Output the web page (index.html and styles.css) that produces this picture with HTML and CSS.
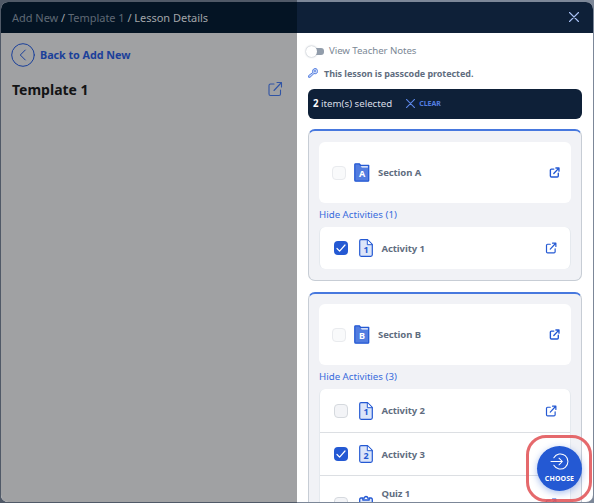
FILE: index.html
```html
<!DOCTYPE html>
<html lang="en">
<head>
<meta charset="utf-8">
<title>Lesson Details</title>
<link rel="stylesheet" href="styles.css">
</head>
<body>
<svg class="defs" aria-hidden="true">
  <symbol id="external" viewBox="0 0 16 16"><path d="M7 3H3.500A1.500 1.500 0 0 0 2 4.500V13a1.500 1.500 0 0 0 1.500 1.500H12a1.500 1.500 0 0 0 1.500-1.500V9M7 9.500L14 2M10 1.500h4.500V6"/></symbol>
  <symbol id="folder" viewBox="0 0 16 19"><path d="M.8 17.200V1.500Q.8.800 1.500.8h3.700l1.300 1.500h8.200v15.200q0 .7-.7.7H1.800q-1 0-1-1z" fill="#527de0" stroke="#2459d3" stroke-width="1.300"/><path d="M6.700 3.300h7.200v1.200H7.800z" fill="#fff"/></symbol>
  <symbol id="file" viewBox="0 0 14 18"><path d="M2 .7h6.500l4.800 4.800v10.300q0 1.500-1.500 1.500H2.200Q.7 17.300.7 15.800V2Q.7.700 2 .7z" fill="#dce5f9" stroke="#2459d3" stroke-width="1.200"/><path d="M8.300 1v4.700h4.700" fill="#fff" stroke="#2459d3" stroke-width="1"/></symbol>
  <symbol id="cross" viewBox="0 0 10 10"><path d="M.5.500l9 9M9.500.500l-9 9"/></symbol>
</svg>
<main class="modal">
  <header class="header">
    <nav class="crumbs"><span>Add New</span> <b>/</b> <span>Template 1</span> <b>/</b> <b>Lesson Details</b></nav>
    <svg class="close"><use href="#cross"/></svg>
  </header>
  <div class="body">
    <section class="left">
      <div class="back">
        <svg viewBox="0 0 24 24"><circle cx="12" cy="12" r="11.300"/><path d="M14.300 7l-5 5 5 5"/></svg>
        <span>Back to Add New</span>
      </div>
      <div class="title"><h1>Template 1</h1><svg><use href="#external"/></svg></div>
    </section>
    <section class="panel">
      <div class="notes"><i class="toggle"></i><span>View Teacher Notes</span></div>
      <div class="passcode">
        <svg viewBox="0 0 10 10"><path d="M4.700 4.100A2.600 2.600 0 1 1 6 5.500L2 9.300H.6V8z" fill="#c9d7f6" stroke="#527de0"/><circle cx="7" cy="3" r=".8" fill="#2459d3"/></svg>
        <span>This lesson is passcode protected.</span>
      </div>
      <div class="selected"><span><strong>2</strong> item(s) selected</span><svg><use href="#cross"/></svg><b>CLEAR</b></div>

      <article class="card">
        <div class="section"><i class="check muted"></i><span class="icon folder"><svg><use href="#folder"/></svg><b>A</b></span><span class="name">Section A</span><svg class="open"><use href="#external"/></svg></div>
        <div class="hide">Hide Activities (1)</div>
        <div class="list">
          <div class="row"><i class="check on"><svg viewBox="0 0 14 14"><path d="M3 7.500l2.600 2.600L11 4"/></svg></i><span class="icon file"><svg><use href="#file"/></svg><b>1</b></span><span class="name">Activity 1</span><svg class="open"><use href="#external"/></svg></div>
        </div>
      </article>

      <article class="card">
        <div class="section"><i class="check muted"></i><span class="icon folder"><svg><use href="#folder"/></svg><b>B</b></span><span class="name">Section B</span><svg class="open"><use href="#external"/></svg></div>
        <div class="hide">Hide Activities (3)</div>
        <div class="list">
          <div class="row"><i class="check"></i><span class="icon file"><svg><use href="#file"/></svg><b>1</b></span><span class="name">Activity 2</span><svg class="open"><use href="#external"/></svg></div>
          <div class="row"><i class="check on"><svg viewBox="0 0 14 14"><path d="M3 7.500l2.600 2.600L11 4"/></svg></i><span class="icon file"><svg><use href="#file"/></svg><b>2</b></span><span class="name">Activity 3</span><svg class="open"><use href="#external"/></svg></div>
          <div class="row quiz"><i class="check"></i><span class="icon file"><svg viewBox="0 0 14 18"><path d="M4 3H2Q.7 3 .7 4.500V16q0 1.300 1.300 1.300h10q1.300 0 1.300-1.300V4.500Q13.300 3 12 3h-2M3.800 5V3.200h1.500a1.700 1.700 0 0 1 3.400 0h1.500V5z" fill="#dce5f9" stroke="#2459d3" stroke-width="1.300"/></svg></span><span class="name">Quiz 1</span><svg class="open"><use href="#external"/></svg></div>
        </div>
      </article>
    </section>
  </div>
</main>
<button class="choose"><svg viewBox="0 0 20 18"><path d="M4 5a8 8 0 1 1 0 8M1 9h12M9.500 5.500L13 9l-3.500 3.500"/></svg><span>CHOOSE</span></button>
<div class="highlight"></div>
</body>
</html>
```
FILE: styles.css
```css
* { box-sizing: border-box; }
body {
  margin: 0;
  height: 503px;
  padding: 2px 1px 1px;
  overflow: hidden;
  background: linear-gradient(90deg, #505967 50%, #7c8798 50%);
  font-family: "Noto Sans", sans-serif;
  font-size: 9.700px;
  color: #5f6d80;
}
svg { display: block; flex: none; fill: none; stroke-linecap: round; stroke-linejoin: round; }
.defs { position: absolute; width: 0; height: 0; }
.modal { height: 500px; border-radius: 7px; overflow: hidden; background: #fff; }
.header {
  height: 31px;
  display: flex;
  align-items: center;
  justify-content: space-between;
  padding: 0 14px 1px 11px;
  background: linear-gradient(90deg, #041424 296px, #0e2038 296px);
}
.crumbs { font-size: 11px; color: #5f6974; white-space: nowrap; letter-spacing: -.03px; }
.crumbs b { font-weight: 400; color: #a2a5a9; }
.close { width: 10px; height: 10px; stroke: #a8c0f5; stroke-width: 1.1; overflow: visible; }
.body { display: flex; height: 469px; }
.left { width: 296px; background: #a0a1a3; padding: 10px 14px 0 10px; }
.back { display: flex; align-items: center; gap: 5px; height: 24px; font-size: 10.800px; letter-spacing: -.05px; font-weight: 700; color: #1b409a; white-space: nowrap; }
.back span { margin-top: -1px; }
.back svg { width: 24px; height: 24px; stroke: #1b409a; stroke-width: 1; }
.title { display: flex; align-items: center; justify-content: space-between; height: 24px; margin: 10px 0 0 1px; }
.title h1 { margin: 0; font-size: 14px; font-weight: 700; color: #131415; }
.title svg { width: 16px; height: 16px; stroke: #3054a5; stroke-width: 1.1; }
.panel { flex: 1; padding: 10px 11px 0; }
.notes { display: flex; align-items: center; height: 16px; gap: 5px; color: #7b8795; white-space: nowrap; letter-spacing: -.08px; }
.notes span { margin-top: -1px; }
.toggle { position: relative; width: 16px; height: 7px; border-radius: 3px; background: #929dab; }
.toggle::before { content: ""; position: absolute; left: -2px; top: -2px; width: 11px; height: 11px; border-radius: 50%; background: #fff; box-shadow: 0 0 2px #8c96a4; }
.passcode { display: flex; align-items: center; gap: 6px; height: 14px; margin-top: 7px; font-size: 9px; font-weight: 700; letter-spacing: -.06px; white-space: nowrap; }
.passcode svg { width: 10px; height: 10px; }
.selected { display: flex; align-items: center; height: 30px; margin-top: 9px; padding: 0 5px 1px; border-radius: 6px; background: #0e2038; color: #d9dee6; white-space: nowrap; }
.selected strong { color: #fff; }
.selected svg { width: 9px; height: 9px; margin: 0 4px 0 14px; stroke: #5d87e8; stroke-width: 1.2; overflow: visible; }
.selected b { font-size: 7px; color: #527de0; }
.card { height: 152px; margin-top: 10px; padding: 11px 10px; border: 1px solid #c7cdd5; border-top: 2px solid #4778de; border-radius: 7px; background: #f1f2f6; }
.card + .card { height: 260px; margin-top: 11px; padding-top: 10px; }
.section { display: flex; align-items: center; height: 61px; padding: 0 11px 0 13px; border-radius: 6px; background: #fff; }
.hide { height: 24px; line-height: 24px; color: #386bdc; white-space: nowrap; }
.list { border: 1px solid #e5e9ee; border-width: 0 1px; border-radius: 6px; background: #fff; overflow: hidden; }
.row { display: flex; align-items: center; height: 42px; padding: 0 13px 0 14px; }
.card + .card .row { height: 43px; }
.row + .row { border-top: 1px solid #dcdfe3; }
.check { width: 14px; height: 14px; border: 1px solid #d5d9de; border-radius: 4px; background: #f3f4f7; flex: none; }
.check.muted { border-color: #e9ebee; background: #f9fafb; }
.check.on { border: 0; background: #2459d3; }
.check.on svg { width: 14px; height: 14px; stroke: #fff; stroke-width: 1.2; }
.icon { display: grid; place-items: center; margin-left: 11px; }
.icon > * { grid-area: 1 / 1; }
.icon b { color: #2459d3; font-size: 9px; line-height: 10px; padding-top: 3px; }
.folder { margin-left: 8px; }
.folder svg { width: 16px; height: 19px; }
.folder b { color: #fff; padding-top: 2px; }
.file svg { width: 14px; height: 18px; }
.name { margin: 0 0 0 8.500px; font-size: 9.500px; letter-spacing: -.08px; font-weight: 700; white-space: nowrap; }
.section .name { margin: -1px 0 0 8px; }
.open { width: 12px; height: 12px; margin-left: auto; stroke: #2459d3; stroke-width: 1.6; }
.section .open { width: 11px; height: 11px; stroke-width: 2; }
.card + .card .quiz { height: 56px; }
.quiz .name { align-self: flex-start; margin-top: 11px; }
.choose { position: absolute; left: 537px; top: 446px; width: 45px; height: 45px; padding: 7px 0 0; border: 0; border-radius: 50%; background: #2459d3; box-shadow: 0 2px 7px #2459d366; color: #fff; font: 700 7px/10px "Noto Sans", sans-serif; display: flex; flex-direction: column; align-items: center; gap: 4px; letter-spacing: .1px; }
.choose svg { width: 19px; height: 17px; stroke: #fff; stroke-width: 1.1; }
.highlight { position: absolute; left: 526px; top: 435px; width: 66px; height: 67px; border: 3px solid #e2595ce6; border-radius: 20px; }
```
